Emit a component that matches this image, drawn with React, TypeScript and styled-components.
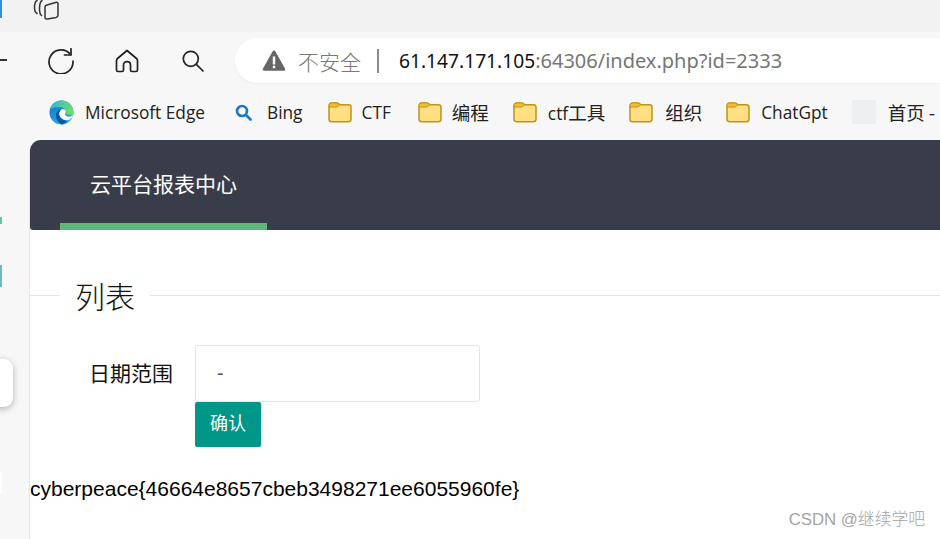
import React from "react";
import styled, { createGlobalStyle } from "styled-components";

const Global = createGlobalStyle`
  html, body { margin: 0; padding: 0; background: #f7f7f7; overflow: hidden; }
  * { box-sizing: border-box; }
`;
const UI = `"Open Sans", "Noto Sans", "Noto Sans CJK SC", sans-serif`;
const Page = styled.div`
  width: 940px; height: 539px; display: flex; flex-direction: column; overflow: hidden; position: relative;
  font-family: "Noto Sans CJK SC", sans-serif;
`;
const TabStrip = styled.div`
  height: 32px; flex: none; background: #f2f2f2; display: flex; align-items: flex-start; padding-left: 33px; position: relative;
`;
const Toolbar = styled.div`
  height: 60px; flex: none; display: flex; align-items: center; padding-bottom: 3px; background: #f7f7f7; position: relative;
`;
const IconBtn = styled.div<{ $left: number }>`
  width: 47px; margin-left: ${p => p.$left}px; flex: none; display: flex; justify-content: center; align-items: center;
`;
const Back = styled.div`
  position: absolute; left: 0; top: 27px; width: 7px; height: 2px; background: #333;
`;
const Address = styled.div`
  margin-left: 19px; flex: 1; height: 45px; background: #fff; border-radius: 23px 0 0 23px;
  display: flex; align-items: center; padding-left: 27px; box-shadow: 0 1px 3px rgba(0,0,0,.05);
  font-family: "Noto Sans", "Noto Sans CJK SC", sans-serif;
`;
const Insecure = styled.span`
  font-size: 21px; color: #787878; margin-left: 12px; font-family: "Noto Sans CJK SC", sans-serif; font-weight: 300;
`;
const Sep = styled.span`
  width: 2px; height: 24px; background: #8a8a8a; margin: 0 20px 0 16px;
`;
const Host = styled.span`color: #111; font-size: 19.2px;`;
const Rest = styled.span`color: #767676; font-size: 20px;`;
const Bookmarks = styled.div`
  height: 48px; flex: none; display: flex; align-items: center; padding: 0 0 8px 49px; background: #f7f7f7;
  font-family: ${UI}; font-size: 17.3px; color: #222; white-space: nowrap; position: relative;
`;
const Mark = styled.div<{ $gap: number; $after: number }>`
  display: flex; align-items: center; gap: ${p => p.$gap}px; margin-right: ${p => p.$after}px; flex: none;
`;
const Cjk = styled.span`font-family: "Noto Sans CJK SC", sans-serif; font-size: 18.5px;`;
const Blank = styled.div`width: 24px; height: 24px; background: #ecf0f3;`;
const Body = styled.div`flex: 1; display: flex; min-height: 0; position: relative;`;
const Rail = styled.div`width: 29px; flex: none; background: #f7f7f7; position: relative;`;
const FloatCard = styled.div`
  position: absolute; left: -12px; top: 219px; width: 25px; height: 48px; background: #fff; border-radius: 9px;
  box-shadow: 0 2px 7px rgba(0,0,0,.28);
`;
const Main = styled.div`
  flex: 1; background: #fff; border-left: 1px solid #e6e6e6; border-radius: 12px 0 0 0; position: relative;
`;
const Header = styled.div`
  height: 90px; background: #393d49; border-radius: 11px 0 0 3px; padding-left: 30px; display: flex;
`;
const NavItem = styled.div`
  width: 207px; height: 90px; border-bottom: 7px solid #5fb878; color: #fff; font-size: 21px;
  padding-left: 30px; padding-top: 28px; line-height: 30px;
`;
const Legend = styled.div`
  margin-top: 46px; height: 38px; display: flex; align-items: center; font-size: 30px; color: #111; font-weight: 300;
`;
const Rule = styled.div<{ $w?: number }>`
  height: 1px; background: #e6e6e6; ${p => p.$w ? `width:${p.$w}px; flex:none;` : "flex: 1;"}
`;
const LegendText = styled.span`padding: 0 15px; line-height: 38px;`;
const FormRow = styled.div`
  margin-top: 31px; display: flex; height: 57px;
`;
const Label = styled.div`
  width: 165px; flex: none; text-align: right; padding-right: 22px; font-size: 21px; line-height: 55px; color: #111;
`;
const Input = styled.div`
  width: 285px; height: 57px; border: 1px solid #e6e6e6; border-radius: 2px; padding-left: 21px; line-height: 55px; font-size: 20px; color: #555;
  font-family: "Liberation Sans", sans-serif;
`;
const Btn = styled.div`
  margin-left: 165px; width: 66px; height: 45px; background: #009688; color: #fff; border-radius: 2px;
  text-align: center; line-height: 41px; font-size: 18px;
`;
const Flag = styled.div`
  margin-top: 30px; font-family: "Liberation Sans", Arial, sans-serif; font-size: 21px; line-height: 24px; color: #000;
`;
const Watermark = styled.div`
  position: absolute; right: 15px; bottom: 8px; font-size: 16.8px; color: #a4a4a4; line-height: 22px; font-family: "Liberation Sans", "Noto Sans CJK SC", sans-serif; font-weight: 300;
`;
const Edge = styled.div<{ $top: number; $h: number; $c: string }>`
  position: absolute; left: 0; top: ${p => p.$top}px; width: 2px; height: ${p => p.$h}px; background: ${p => p.$c};
`;

const Folder = () => (
  <svg width="24" height="22" viewBox="0 0 24 22">
    <path d="M1 5.500C1 3.500 2 2 4 2h5c1.200 0 2 .8 3 1.800h8.500c1.500 0 2.500 1 2.500 2.500V18c0 1.800-1 2.800-2.800 2.800H3.800C2 20.800 1 19.800 1 18z" fill="#ffdf83" stroke="#c0931c" strokeWidth="1.500" />
    <path d="M1 6.500V4.500C1 3 2 2 3.500 2H8.500c1.200 0 2 .8 3 1.800-1 1.500-2 2-3.500 2.200H3C2 6 1.500 6.200 1 6.500z" fill="#f6bd2b" stroke="#c0931c" strokeWidth="1" />
  </svg>
);
const EdgeLogo = () => (
  <svg width="25" height="25" viewBox="0 0 25 25">
    <defs>
      <linearGradient id="g1" x1="0" y1="0" x2=".8" y2="1"><stop offset="0" stopColor="#0f6fc4" /><stop offset="1" stopColor="#2fb6ee" /></linearGradient>
      <linearGradient id="g2" x1="0" y1=".3" x2="1" y2=".6"><stop offset="0" stopColor="#2fb6d8" /><stop offset="1" stopColor="#74dd62" /></linearGradient>
    </defs>
    <circle cx="12.500" cy="12.500" r="12" fill="url(#g1)" />
    <path d="M1 9.500C2.500 4 7 .5 12.500 .5 19 .5 24.500 6 24.500 12.500c0 1-.1 2-.3 2.800L16 14c1-1 1.500-2 .8-3.500C15.500 8 13 7 10 7 6.500 7 3 7.800 1 9.500z" fill="url(#g2)" />
    <path d="M7 15.500c0-3.500 2.500-6 5.500-6.300-1.500 1.200-2.400 3-2.200 5 .3 3.500 4 6.500 8.500 6.300-1.800 2-3.800 3.500-6 4C9.500 23 7 19.500 7 15.500z" fill="#0c59a4" />
    <path d="M10.300 14.200c.3 3.500 4 6.300 8.500 6 2.700-.8 4.700-2.700 5.500-5-1.500 1.300-4 1.800-6 1.200-2-.6-2.800-2-2.100-3.300.5-.9 1-1.600.4-2.600-.7-1-2.500-1.600-4-1-1.500 1-2.500 2.700-2.300 4.700z" fill="#fff" />
  </svg>
);

export default function App() {
  return (
    <Page>
      <Global />
      <TabStrip>
        <Edge $top={0} $h={18} $c="#2f8fe0" />
        <svg width="26" height="22" viewBox="0 0 26 22" fill="none" stroke="#333" strokeWidth="1.500" strokeLinejoin="round" strokeLinecap="round">
          <path d="M4 .5C2 1.500 1.500 3.500 1.500 7.500c0 3 .8 5 2.500 6" />
          <path d="M9 .5C7.200 1.500 6.500 3.500 6.500 9c0 3.500.6 5.500 2 6.500" />
          <path d="M14 5l8.500-2.500c2-.5 2.500.3 2.500 1.500V15c0 1.300-.6 2-1.800 2.400L14.500 19c-2 .4-2.500-.5-2.500-1.500V7c0-1 .6-1.600 2-2z" />
        </svg>
      </TabStrip>
      <Toolbar>
        <Back />
        <IconBtn $left={37}>
          <svg width="26" height="26" viewBox="0 0 26 26" fill="none" stroke="#222" strokeWidth="1.700" strokeLinecap="round" strokeLinejoin="round">
            <path d="M22.500 6.500A12 12 0 1 0 25 13" />
            <path d="M23 .8V7h-6.500" />
          </svg>
        </IconBtn>
        <IconBtn $left={19}>
          <svg width="24" height="24" viewBox="0 0 24 24" fill="none" stroke="#222" strokeWidth="1.700" strokeLinejoin="round">
            <path d="M12 1.500 2.500 9.500c-.7.600-1 1.200-1 2V21c0 1 .6 1.500 1.500 1.500h4c1 0 1.500-.5 1.500-1.500v-5c0-2 1.300-3.300 3.500-3.300s3.500 1.300 3.500 3.300v5c0 1 .5 1.500 1.500 1.500h4c.9 0 1.500-.5 1.500-1.500v-9.500c0-.8-.3-1.400-1-2z" />
          </svg>
        </IconBtn>
        <IconBtn $left={19}>
          <svg width="22" height="22" viewBox="0 0 22 22" fill="none" stroke="#222" strokeWidth="1.700" strokeLinecap="round">
            <circle cx="8.800" cy="8.800" r="7.500" />
            <path d="M14.300 14.300 21 21" />
          </svg>
        </IconBtn>
        <Address>
          <svg width="24" height="23" viewBox="0 0 24 23">
            <path d="M12 1.500c.6 0 1 .3 1.300.8l9.800 17.500c.5 1 0 1.900-1.200 1.900H2.100C.9 21.700.4 20.800.9 19.800L10.700 2.300c.3-.5.700-.8 1.300-.8z" fill="#666" />
            <rect x="10.800" y="7.500" width="2.400" height="8" fill="#fff" />
            <rect x="10.800" y="16.800" width="2.400" height="2.400" fill="#fff" />
          </svg>
          <Insecure>不安全</Insecure>
          <Sep />
          <Host>61.147.171.105</Host>
          <Rest>:64306/index.php?id=2333</Rest>
        </Address>
      </Toolbar>
      <Bookmarks>
        <Mark $gap={11} $after={30}><EdgeLogo />Microsoft Edge</Mark>
        <Mark $gap={15} $after={25}>
          <svg width="17" height="17" viewBox="0 0 17 17" fill="none" stroke="#1b77c9" strokeWidth="2.600" strokeLinecap="round"><circle cx="7" cy="7" r="5" /><path d="M11 11l4.500 4.500" /></svg>
          Bing
        </Mark>
        <Mark $gap={10} $after={27}><Folder />CTF</Mark>
        <Mark $gap={10} $after={24}><Folder /><Cjk>编程</Cjk></Mark>
        <Mark $gap={11} $after={24}><Folder /><span>ctf<Cjk>工具</Cjk></span></Mark>
        <Mark $gap={12} $after={24}><Folder /><Cjk>组织</Cjk></Mark>
        <Mark $gap={11} $after={24}><Folder />ChatGpt</Mark>
        <Mark $gap={12} $after={0}><Blank /><Cjk>首页 -</Cjk></Mark>
      </Bookmarks>
      <Body>
        <Rail>
          <Edge $top={77} $h={7} $c="#5fc8a0" />
          <Edge $top={125} $h={22} $c="#6fb7c8" />
          <Edge $top={332} $h={22} $c="#ffffff" />
          <FloatCard />
        </Rail>
        <Main>
          <Header><NavItem>云平台报表中心</NavItem></Header>
          <Legend><Rule $w={30} /><LegendText>列表</LegendText><Rule /></Legend>
          <FormRow><Label>日期范围</Label><Input>-</Input></FormRow>
          <Btn>确认</Btn>
          <Flag>cyberpeace{"{"}46664e8657cbeb3498271ee6055960fe{"}"}</Flag>
        </Main>
        <Watermark>CSDN @继续学吧</Watermark>
      </Body>
    </Page>
  );
}
